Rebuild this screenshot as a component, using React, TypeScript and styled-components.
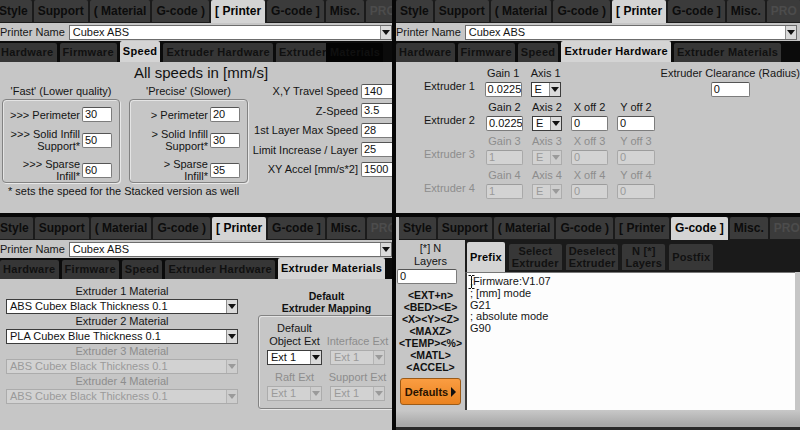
import React from "react";
import styled, { createGlobalStyle } from "styled-components";

const GlobalStyle = createGlobalStyle`
  html, body { margin: 0; padding: 0; background: #000; }
  body {
    width: 800px;
    height: 430px;
    overflow: hidden;
    font-family: "Liberation Sans", Arial, sans-serif;
    font-size: 11px;
    color: #141414;
  }
  * { box-sizing: border-box; }
`;

const MAIN_TABS = ["Style", "Support", "( Material", "G-code )", "[ Printer", "G-code ]", "Misc.", "PRO"];
const SUB_TABS = ["Hardware", "Firmware", "Speed", "Extruder Hardware", "Extruder Materials"];

const EXTRUDERS = [
  { n: 1, gain: "0.0225", enabled: true, offsets: false },
  { n: 2, gain: "0.0225", enabled: true, offsets: true },
  { n: 3, gain: "1", enabled: false, offsets: true },
  { n: 4, gain: "1", enabled: false, offsets: true },
];

const MATERIALS = [
  { label: "Extruder 1 Material", value: "ABS Cubex Black Thickness 0.1", enabled: true },
  { label: "Extruder 2 Material", value: "PLA Cubex Blue Thickness 0.1", enabled: true },
  { label: "Extruder 3 Material", value: "ABS Cubex Black Thickness 0.1", enabled: false },
  { label: "Extruder 4 Material", value: "ABS Cubex Black Thickness 0.1", enabled: false },
];

const TAGS = ["<EXT+n>", "<BED><E>", "<X><Y><Z>", "<MAXZ>", "<TEMP><%>", "<MATL>", "<ACCEL>"];
const GCODE_TABS = ["Prefix", "Select\nExtruder", "Deselect\nExtruder", "N [*]\nLayers", "Postfix"];
const PREFIX_TEXT = ";Firmware:V1.07\n; [mm] mode\nG21\n; absolute mode\nG90";

// ---------- shared chrome ----------

const TabStrip = styled.div<{ $shift: number }>`
  display: flex;
  flex: none;
  gap: 2px;
  height: 23px;
  margin-left: ${(p) => p.$shift}px;
  background: #1b1b1b;
  white-space: nowrap;
`;

const MainTab = styled.div<{ $active?: boolean; $dim?: boolean }>`
  flex: none;
  padding: 0 4px;
  height: ${(p) => (p.$active ? 23 : 22)}px;
  line-height: 22px;
  font-size: 12px;
  font-weight: 700;
  border-radius: 2px 2px 0 0;
  background: ${(p) => (p.$active ? "#d4d4d4" : "#3b3b3b")};
  color: ${(p) => (p.$active ? "#050505" : p.$dim ? "#4c4c4c" : "#0c0c0c")};
`;

const NameRow = styled.div<{ $trim: number }>`
  display: flex;
  flex: none;
  align-items: center;
  gap: 4px;
  height: 18px;
  padding: 0 ${(p) => p.$trim}px 0 0;
  background: #c6c6c6;
`;

const NameLabel = styled.span`
  white-space: nowrap;
  color: #161616;
`;

const Combo = styled.div`
  flex: 1;
  display: flex;
  height: 15px;
  background: #fff;
  border: 1px solid #6c6c6c;
  line-height: 13px;
`;

const ComboText = styled.span`
  flex: 1;
  padding-left: 3px;
  white-space: nowrap;
  overflow: hidden;
`;

const Arrow = styled.span<{ $disabled?: boolean }>`
  flex: none;
  width: 11px;
  display: flex;
  align-items: center;
  justify-content: center;
  background: ${(p) => (p.$disabled ? "#cdcdcd" : "#dadada")};
  border-left: 1px solid ${(p) => (p.$disabled ? "#b4b4b4" : "#8e8e8e")};
  &::after {
    content: "";
    border-left: 4px solid transparent;
    border-right: 4px solid transparent;
    border-top: 5px solid ${(p) => (p.$disabled ? "#9a9a9a" : "#111")};
  }
`;

const SubStrip = styled.div<{ $shift: number }>`
  display: flex;
  flex: none;
  align-items: flex-end;
  gap: 3px;
  height: 21px;
  margin-left: ${(p) => p.$shift}px;
  background: #0b0b0b;
  white-space: nowrap;
`;

const SubTab = styled.div<{ $active?: boolean; $mask?: boolean }>`
  flex: none;
  padding: 0 3px;
  height: ${(p) => (p.$active ? 21 : 19)}px;
  line-height: ${(p) => (p.$active ? 21 : 19)}px;
  font-size: 11px;
  font-weight: 700;
  letter-spacing: 0.3px;
  border-radius: 2px 2px 0 0;
  color: ${(p) => (p.$active ? "#050505" : "#101010")};
  background: ${(p) =>
    p.$active ? "#d4d4d4" : p.$mask ? "linear-gradient(90deg, #363636 0 50px, #030303 50px)" : "#363636"};
`;

const TextBox = styled.div<{ $w: number; $disabled?: boolean }>`
  flex: none;
  width: ${(p) => p.$w}px;
  height: 15px;
  padding-left: 2px;
  line-height: 13px;
  white-space: nowrap;
  overflow: hidden;
  border: 1px solid ${(p) => (p.$disabled ? "#a9a9a9" : "#7c7c7c")};
  border-top-color: ${(p) => (p.$disabled ? "#9c9c9c" : "#555")};
  border-radius: 2px;
  background: ${(p) => (p.$disabled ? "#d3d3d3" : "#fff")};
  color: ${(p) => (p.$disabled ? "#9a9a9a" : "#111")};
`;

const SelectBox = styled.div<{ $w: number; $disabled?: boolean }>`
  flex: none;
  display: flex;
  width: ${(p) => p.$w}px;
  height: 15px;
  line-height: 13px;
  border: 1px solid ${(p) => (p.$disabled ? "#acacac" : "#3c3c3c")};
  background: ${(p) => (p.$disabled ? "#d2d2d2" : "#fff")};
  color: ${(p) => (p.$disabled ? "#9a9a9a" : "#111")};
`;

const Select: React.FC<{ w: number; value: string; disabled?: boolean }> = ({ w, value, disabled }) => (
  <SelectBox $w={w} $disabled={disabled}>
    <ComboText>{value}</ComboText>
    <Arrow $disabled={disabled} />
  </SelectBox>
);

const Chrome: React.FC<{
  tab: string;
  sub?: string;
  tabShift: number;
  subShift?: number;
  trim: number;
  maskLast?: boolean;
}> = ({ tab, sub, tabShift, subShift = 0, trim, maskLast }) => (
  <>
    <TabStrip $shift={tabShift}>
      {MAIN_TABS.map((t) => (
        <MainTab key={t} $active={t === tab} $dim={t === "PRO"}>
          {t}
        </MainTab>
      ))}
    </TabStrip>
    {sub && (
      <>
        <NameRow $trim={trim}>
          <NameLabel>Printer Name</NameLabel>
          <Combo>
            <ComboText>Cubex ABS</ComboText>
            <Arrow />
          </Combo>
        </NameRow>
        <SubStrip $shift={subShift}>
          {SUB_TABS.map((t, i) => (
            <SubTab key={t} $active={t === sub} $mask={maskLast && i === SUB_TABS.length - 1}>
              {t}
            </SubTab>
          ))}
        </SubStrip>
      </>
    )}
  </>
);

// ---------- layout ----------

const Screen = styled.div`
  display: grid;
  grid-template-columns: 392px 404px;
  grid-template-rows: 213px 213px;
  gap: 4px;
  width: 800px;
  height: 430px;
  background: #060606;
`;

const Panel = styled.section`
  display: flex;
  flex-direction: column;
  min-width: 0;
  overflow: hidden;
  background: #c6c6c6;
`;

// ---------- speed panel ----------

const SpeedTitle = styled.div`
  margin-top: 2px;
  padding-left: 10px;
  text-align: center;
  font-size: 15px;
  line-height: 18px;
  color: #111;
`;

const SpeedColumns = styled.div`
  display: flex;
  margin-top: 1px;
  padding-left: 2px;
`;

const SpeedLeft = styled.div`
  display: flex;
  flex-direction: column;
  width: 248px;
`;

const GroupPair = styled.div`
  display: flex;
  gap: 9px;
`;

const SpeedGroup = styled.div<{ $w: number }>`
  display: flex;
  flex-direction: column;
  width: ${(p) => p.$w}px;
`;

const GroupHead = styled.div`
  text-align: center;
  line-height: 16px;
  white-space: nowrap;
`;

const GroupBox = styled.div`
  display: flex;
  flex-direction: column;
  align-items: flex-end;
  gap: 6px;
  height: 84px;
  padding: 7px 7px 0 0;
  border: 1px solid #828282;
  border-radius: 4px;
  box-shadow: inset 1px 1px 0 #e4e4e4, 1px 1px 0 #e8e8e8;
`;

const SpeedRow = styled.div`
  display: flex;
  align-items: center;
  gap: 2px;
`;

const RowLabel = styled.span`
  text-align: right;
  line-height: 12px;
  white-space: pre;
`;

const Footnote = styled.div`
  margin-top: 2px;
  padding-left: 6px;
  line-height: 12px;
  white-space: nowrap;
`;

const SpeedRight = styled.div`
  flex: 1;
  display: flex;
  flex-direction: column;
  align-items: flex-end;
  gap: 3.5px;
  margin-right: -5px;
`;

const FieldRow = styled.div`
  display: flex;
  align-items: center;
  gap: 3px;
  height: 16px;
  white-space: nowrap;
`;

const speedGroups = [
  { head: "'Fast' (Lower quality)", w: 118, p: ">>>", v: ["30", "50", "60"] },
  { head: "'Precise' (Slower)", w: 119, p: ">", v: ["20", "30", "35"] },
];

const speedFields = [
  ["X,Y Travel Speed", "140"],
  ["Z-Speed", "3.5"],
  ["1st Layer Max Speed", "28"],
  ["Limit Increase / Layer", "25"],
  ["XY Accel [mm/s*2]", "1500"],
];

const SpeedPanel = () => (
  <Panel>
    <Chrome tab="[ Printer" sub="Speed" tabShift={-5} subShift={-2} trim={-4} maskLast />
    <SpeedTitle>All speeds in [mm/s]</SpeedTitle>
    <SpeedColumns>
      <SpeedLeft>
        <GroupPair>
          {speedGroups.map((g) => (
            <SpeedGroup key={g.head} $w={g.w}>
              <GroupHead>{g.head}</GroupHead>
              <GroupBox>
                <SpeedRow>
                  <RowLabel>{`${g.p} Perimeter`}</RowLabel>
                  <TextBox $w={30}>{g.v[0]}</TextBox>
                </SpeedRow>
                <SpeedRow>
                  <RowLabel>{`${g.p} Solid Infill\nSupport*`}</RowLabel>
                  <TextBox $w={30}>{g.v[1]}</TextBox>
                </SpeedRow>
                <SpeedRow>
                  <RowLabel>{`${g.p} Sparse\nInfill*`}</RowLabel>
                  <TextBox $w={30}>{g.v[2]}</TextBox>
                </SpeedRow>
              </GroupBox>
            </SpeedGroup>
          ))}
        </GroupPair>
        <Footnote>* sets the speed for the Stacked version as well</Footnote>
      </SpeedLeft>
      <SpeedRight>
        {speedFields.map(([label, value]) => (
          <FieldRow key={label}>
            <span>{label}</span>
            <TextBox $w={36}>{value}</TextBox>
          </FieldRow>
        ))}
      </SpeedRight>
    </SpeedColumns>
  </Panel>
);

// ---------- extruder hardware panel ----------

const HwBody = styled.div`
  display: flex;
  flex-direction: column;
  gap: 4px;
  padding: 5px 0 0 28px;
`;

const HwRow = styled.div`
  display: flex;
  align-items: flex-end;
  gap: 9px;
`;

const ExtLabel = styled.span<{ $disabled?: boolean }>`
  width: 53px;
  padding-bottom: 5px;
  white-space: nowrap;
  color: ${(p) => (p.$disabled ? "#8d8d8d" : "#161616")};
`;

const Field = styled.div<{ $gapLeft?: number }>`
  display: flex;
  flex-direction: column;
  align-items: center;
  margin-left: ${(p) => p.$gapLeft ?? 0}px;
`;

const Caption = styled.span<{ $disabled?: boolean }>`
  line-height: 13px;
  margin-bottom: 2px;
  white-space: pre;
  text-align: center;
  color: ${(p) => (p.$disabled ? "#8d8d8d" : "#161616")};
`;

const HardwarePanel = () => (
  <Panel>
    <Chrome tab="[ Printer" sub="Extruder Hardware" tabShift={0} trim={3} />
    <HwBody>
      {EXTRUDERS.map((e) => {
        const off = !e.enabled;
        return (
          <HwRow key={e.n}>
            <ExtLabel $disabled={off}>Extruder {e.n}</ExtLabel>
            <Field>
              <Caption $disabled={off}>Gain {e.n}</Caption>
              <TextBox $w={37} $disabled={off}>
                {e.gain}
              </TextBox>
            </Field>
            <Field>
              <Caption $disabled={off}>Axis {e.n}</Caption>
              <Select w={30} value="E" disabled={off} />
            </Field>
            {e.offsets ? (
              <>
                <Field>
                  <Caption $disabled={off}>X off {e.n}</Caption>
                  <TextBox $w={37} $disabled={off}>
                    0
                  </TextBox>
                </Field>
                <Field>
                  <Caption $disabled={off}>Y off {e.n}</Caption>
                  <TextBox $w={38} $disabled={off}>
                    0
                  </TextBox>
                </Field>
              </>
            ) : (
              <Field $gapLeft={91}>
                <Caption>Extruder Clearance (Radius)</Caption>
                <TextBox $w={39}>0</TextBox>
              </Field>
            )}
          </HwRow>
        );
      })}
    </HwBody>
  </Panel>
);

// ---------- extruder materials panel ----------

const MatBody = styled.div`
  display: flex;
  gap: 20px;
`;

const MatList = styled.div`
  display: flex;
  flex-direction: column;
  gap: 1px;
  width: 238px;
  padding: 6px 0 0 6px;
`;

const MatItem = styled.div`
  display: flex;
  flex-direction: column;
  align-items: center;
`;

const MatLabel = styled.span<{ $disabled?: boolean }>`
  line-height: 13px;
  margin-bottom: 1px;
  color: ${(p) => (p.$disabled ? "#8d8d8d" : "#161616")};
`;

const Mapping = styled.div`
  display: flex;
  flex-direction: column;
  flex: none;
  width: 137px;
  padding-top: 11px;
`;

const MappingTitle = styled.div`
  text-align: center;
  font-size: 10.5px;
  font-weight: 700;
  line-height: 12px;
  margin-bottom: 1px;
  color: #111;
`;

const MappingBox = styled.div`
  display: grid;
  grid-template-columns: 55px 55px;
  column-gap: 8px;
  row-gap: 6px;
  align-items: end;
  padding: 6px 0 7px 8px;
  border: 1px solid #828282;
  border-radius: 3px;
  box-shadow: inset 1px 1px 0 #e4e4e4, 1px 1px 0 #e8e8e8;
`;

const MaterialsPanel = () => (
  <Panel>
    <Chrome tab="[ Printer" sub="Extruder Materials" tabShift={-4} trim={-4} />
    <MatBody>
      <MatList>
        {MATERIALS.map((m) => (
          <MatItem key={m.label}>
            <MatLabel $disabled={!m.enabled}>{m.label}</MatLabel>
            <Select w={232} value={m.value} disabled={!m.enabled} />
          </MatItem>
        ))}
      </MatList>
      <Mapping>
        <MappingTitle>
          Default
          <br />
          Extruder Mapping
        </MappingTitle>
        <MappingBox>
          <Field>
            <Caption>{"Default\nObject Ext"}</Caption>
            <Select w={55} value="Ext 1" />
          </Field>
          <Field>
            <Caption $disabled>Interface Ext</Caption>
            <Select w={55} value="Ext 1" disabled />
          </Field>
          <Field>
            <Caption $disabled>Raft Ext</Caption>
            <Select w={55} value="Ext 1" disabled />
          </Field>
          <Field>
            <Caption $disabled>Support Ext</Caption>
            <Select w={55} value="Ext 1" disabled />
          </Field>
        </MappingBox>
      </Mapping>
    </MatBody>
  </Panel>
);

// ---------- g-code panel ----------

const GcodeBody = styled.div`
  display: flex;
  height: 170px;
`;

const Sidebar = styled.div`
  display: flex;
  flex-direction: column;
  align-items: center;
  flex: none;
  width: 69px;
  padding-top: 2px;
`;

const SideCaption = styled.div`
  line-height: 13px;
  text-align: center;
  white-space: pre;
`;

const LayerInput = styled(TextBox)`
  align-self: flex-start;
  margin: 1px 0 5px 1px;
`;

const Tag = styled.div`
  font-size: 10.5px;
  font-weight: 700;
  line-height: 12px;
  white-space: nowrap;
  color: #111;
`;

const DefaultsButton = styled.div`
  display: flex;
  align-items: center;
  justify-content: center;
  gap: 3px;
  width: 61px;
  height: 27px;
  margin-top: 5px;
  border: 1px solid #9c5a16;
  border-radius: 3px;
  background: linear-gradient(#fa9d42, #ea821e);
  font-weight: 700;
  font-size: 11px;
  color: #2a1300;
  &::after {
    content: "";
    border-left: 5px solid #111;
    border-top: 5px solid transparent;
    border-bottom: 5px solid transparent;
  }
`;

const GcodeMain = styled.div`
  display: flex;
  flex-direction: column;
  flex: 1;
  min-width: 0;
`;

const GcodeTabs = styled.div`
  display: flex;
  align-items: flex-end;
  gap: 4px;
  flex: none;
  height: 32px;
  padding-left: 2px;
  background: #1a1a1a;
`;

const GcodeTab = styled.div<{ $active?: boolean }>`
  display: flex;
  align-items: center;
  flex: none;
  height: ${(p) => (p.$active ? 30 : 26)}px;
  margin-bottom: ${(p) => (p.$active ? 0 : 2)}px;
  padding: 0 3px;
  font-size: 11px;
  font-weight: 700;
  line-height: 12px;
  letter-spacing: 0.2px;
  text-align: center;
  white-space: pre;
  border-radius: 2px 2px 0 0;
  background: ${(p) => (p.$active ? "#d4d4d4" : "#373737")};
  color: ${(p) => (p.$active ? "#050505" : "#111")};
`;

const Editor = styled.div`
  position: relative;
  flex: 1;
  margin-right: 5px;
  padding: 3px 0 0 3px;
  background: #fdfdfd;
  border-left: 2px solid #3a3a3a;
  border-top: 1px solid #777;
  line-height: 11.8px;
  white-space: pre;
  color: #151515;
`;

const Caret = styled.svg`
  position: absolute;
  left: 1px;
  top: 2px;
`;

const BottomStrip = styled.div`
  flex: none;
  height: 20px;
  background: linear-gradient(#c8c8c8, #a9a9a9 85%);
  border-bottom: 3px solid #2a2a2a;
`;

const GcodePanel = () => (
  <Panel>
    <Chrome tab="G-code ]" tabShift={3} trim={0} />
    <GcodeBody>
      <Sidebar>
        <SideCaption>{"[*] N\nLayers"}</SideCaption>
        <LayerInput $w={60}>0</LayerInput>
        {TAGS.map((t) => (
          <Tag key={t}>{t}</Tag>
        ))}
        <DefaultsButton>Defaults</DefaultsButton>
      </Sidebar>
      <GcodeMain>
        <GcodeTabs>
          {GCODE_TABS.map((t, i) => (
            <GcodeTab key={t} $active={i === 0}>
              {t}
            </GcodeTab>
          ))}
        </GcodeTabs>
        <Editor>
          <Caret width="7" height="14" viewBox="0 0 7 14">
            <path d="M0.5 0.5h2.5M4 0.5h2.5M3.5 1v12M0.5 13.5h2.5M4 13.5h2.5" stroke="#111" strokeWidth="1" fill="none" />
          </Caret>
          {PREFIX_TEXT}
        </Editor>
      </GcodeMain>
    </GcodeBody>
    <BottomStrip />
  </Panel>
);

export default function App() {
  return (
    <>
      <GlobalStyle />
      <Screen>
        <SpeedPanel />
        <HardwarePanel />
        <MaterialsPanel />
        <GcodePanel />
      </Screen>
    </>
  );
}
